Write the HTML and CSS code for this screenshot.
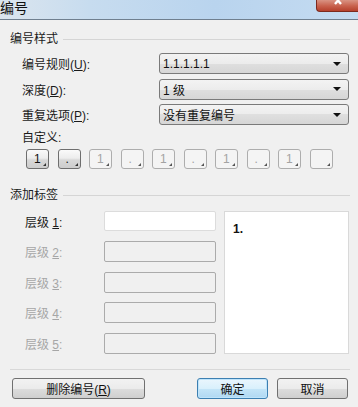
FILE: index.html
```html
<!DOCTYPE html>
<html lang="zh-CN">
<head>
  <meta charset="UTF-8">
  <title>编号</title>
  <link rel="stylesheet" href="styles.css">
</head>
<body>

<div class="dialog">
  <div class="titlebar">
    <span class="title">编号</span>
    <span class="close">
      <svg width="12" height="6" viewBox="0 0 12 6">
        <path d="M1 -3 L7 4 M7 -3 L1 4" stroke="#fff" stroke-width="2.4" fill="none"/>
      </svg>
    </span>
  </div>

  <div class="content">
    <div class="group-head"><span>编号样式</span></div>

    <div class="form-grid">
      <label>编号规则(<u>U</u>):</label>
      <div class="select"><span>1.1.1.1.1</span><i class="arrow"></i></div>
      <label>深度(<u>D</u>):</label>
      <div class="select"><span>1 级</span><i class="arrow"></i></div>
      <label>重复选项(<u>P</u>):</label>
      <div class="select"><span>没有重复编号</span><i class="arrow"></i></div>
    </div>

    <div class="custom-label">自定义:</div>
    <div class="tokens">
      <span class="token">1</span>
      <span class="token">.</span>
      <span class="token off">1</span>
      <span class="token off">.</span>
      <span class="token off">1</span>
      <span class="token off">.</span>
      <span class="token off">1</span>
      <span class="token off">.</span>
      <span class="token off">1</span>
      <span class="token off"></span>
    </div>

    <div class="group-head second"><span>添加标签</span></div>

    <div class="tag-area">
      <div class="levels">
        <label>层级 <u>1</u>:</label><div class="field"></div>
        <label class="off">层级 <u>2</u>:</label><div class="field off"></div>
        <label class="off">层级 <u>3</u>:</label><div class="field off"></div>
        <label class="off">层级 <u>4</u>:</label><div class="field off"></div>
        <label class="off">层级 <u>5</u>:</label><div class="field off"></div>
      </div>
      <div class="preview">1.</div>
    </div>

    <div class="footer">
      <button class="btn wide">删除编号(<u>R</u>)</button>
      <div class="spacer"></div>
      <button class="btn primary">确定</button>
      <button class="btn">取消</button>
    </div>
  </div>
</div>

</body>
</html>
```

FILE: styles.css
```css
* {
  box-sizing: border-box;
}
body {
  margin: 0;
  background: #f0f0f0;
  font-family: "Liberation Sans", "Noto Sans CJK SC", sans-serif;
  font-size: 12px;
  color: #1a1a1a;
}
u {
  text-decoration: underline;
  text-underline-offset: 1px;
}
.dialog {
  width: 358px;
  height: 407px;
  overflow: hidden;
}
.titlebar {
  height: 20px;
  display: flex;
  justify-content: space-between;
  align-items: flex-start;
  background: linear-gradient(to right, #dbe5ee, #c7dcef 25%, #b9d4ee 60%, #c4dbf1);
  border-bottom: 1px solid #6f7f8f;
}
.title {
  font-size: 14px;
  line-height: 17px;
  color: #111;
}
.close {
  width: 42px;
  height: 12px;
  display: flex;
  justify-content: center;
  align-items: flex-start;
  background: linear-gradient(#d99383, #c8604c 55%, #b5412d);
  border: 1px solid #7d2a1e;
  border-top: none;
  border-right: none;
  border-bottom-left-radius: 4px;
}
.close svg {
  display: block;
  margin-left: 4px;
}
.content {
  padding: 0 8px 0 10px;
}
.group-head {
  margin-top: 12px;
  height: 14px;
  display: flex;
  align-items: center;
  gap: 5px;
  line-height: 14px;
}
.group-head::after {
  content: "";
  flex: 1;
  border-top: 1px solid #d5d5d5;
}
.group-head.second {
  margin-top: 19px;
}
.form-grid {
  margin-top: 7px;
  padding-left: 12px;
  display: grid;
  grid-template-columns: 137px 190px;
  grid-auto-rows: 21px;
  row-gap: 4.5px;
  align-items: center;
}
.select {
  height: 21px;
  display: flex;
  align-items: center;
  justify-content: space-between;
  padding: 0 7px 0 3px;
  border: 1px solid #7a7a7a;
  border-radius: 3px;
  background: linear-gradient(#f3f3f3, #ececec 50%, #dfdfdf 50%, #d6d6d6);
  color: #111;
}
.arrow {
  width: 0;
  height: 0;
  border-left: 4px solid transparent;
  border-right: 4px solid transparent;
  border-top: 4px solid #111;
}
.custom-label {
  margin-top: 6px;
  padding-left: 12px;
  line-height: 14px;
}
.tokens {
  margin-top: 4px;
  padding-left: 16px;
  display: flex;
  gap: 8.5px;
}
.token {
  position: relative;
  width: 23px;
  height: 20px;
  padding-left: 7px;
  line-height: 18px;
  border: 1px solid #6e6e6e;
  border-radius: 3px;
  background: linear-gradient(#fafafa, #ededed 45%, #d8d8d8 55%, #cdcdcd);
  color: #111;
}
.token::after {
  content: "";
  position: absolute;
  right: 2px;
  bottom: 2px;
  border-left: 3px solid transparent;
  border-bottom: 3px solid #333;
}
.token.off {
  border-color: #adadad;
  background: #f4f4f4;
  color: #a3a3a3;
}
.token.off::after {
  border-bottom-color: #555;
}
.tag-area {
  margin-top: 9px;
  padding-left: 15px;
  display: flex;
  gap: 8px;
}
.levels {
  display: grid;
  grid-template-columns: 79px 112px;
  grid-auto-rows: 20px;
  row-gap: 10.5px;
  align-items: center;
  align-content: start;
}
.levels label.off {
  color: #a6a6a6;
}
.field {
  height: 20px;
  background: #fff;
  border: 1px solid #dcdcdc;
  border-radius: 2px;
}
.field.off {
  height: 21px;
  background: #f0f0f0;
  border-color: #ababab;
}
.preview {
  width: 125px;
  height: 143px;
  padding: 10px 8px;
  background: #fff;
  border: 1px solid #d9d9d9;
  font-weight: bold;
  color: #111;
}
.footer {
  margin-top: 15px;
  padding: 8px 2px 0 2px;
  border-top: 1px solid #d8d8d8;
  display: flex;
  gap: 9px;
}
.spacer {
  flex: 1;
}
.btn {
  width: 71px;
  height: 21px;
  padding: 0;
  font-family: inherit;
  font-size: 12px;
  color: #111;
  border: 1px solid #707070;
  border-radius: 3px;
  background: linear-gradient(#f2f2f2, #ebebeb 50%, #dddddd 50%, #cfcfcf);
}
.btn.wide {
  width: 133px;
}
.btn.primary {
  border-color: #3c7fb1;
  background: linear-gradient(#eaf6fd, #d9f0fc 50%, #c4e5f8 50%, #b0d8f2);
  box-shadow: inset 0 0 0 1px #bfe4fb;
}
```
